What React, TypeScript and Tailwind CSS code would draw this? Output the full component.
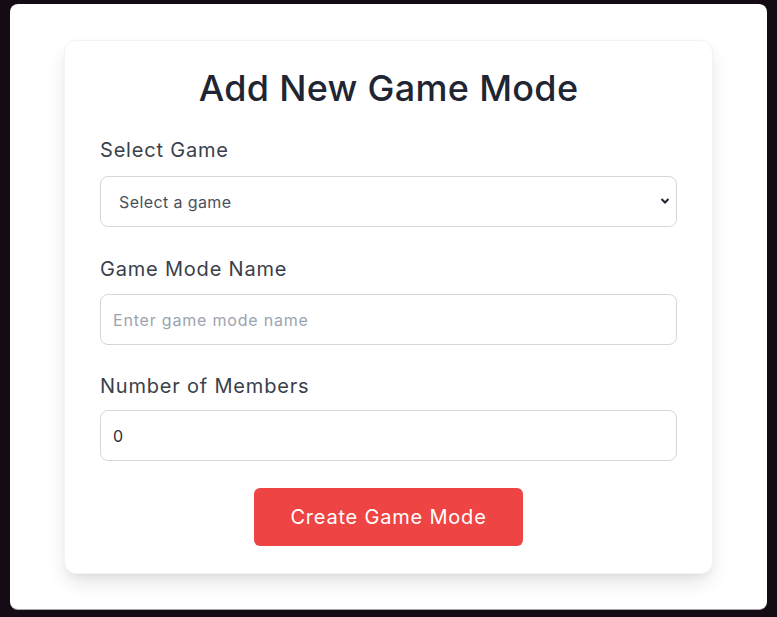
import React from "react";

export default function App() {
  return (
    <div className="w-[777px] h-[617px] bg-[#140b14] pt-[4px] px-[10px] pb-[7px]" style={{ fontFamily: "Inter, 'Noto Sans', sans-serif" }}>
      <div className="h-full bg-white rounded-[8px] border-b border-[#a8a4a8] pt-[36px] px-[54px]">
        <div className="bg-white rounded-[12px] shadow-[0_10px_20px_-3px_rgba(0,0,0,0.12),0_4px_8px_-4px_rgba(0,0,0,0.08)] border border-[#f3f3f3] px-[35px] pt-[27px] pb-[27px]">
          <h1 className="text-center text-[36px] leading-[40px] tracking-[0.3px] font-medium text-[#1f2533]">Add New Game Mode</h1>
          <div className="mt-[28px]">
            <label className="block text-[20px] leading-[28px] tracking-[0.8px] text-[#3a3f4b]">Select Game</label>
            <div className="relative mt-[12px]">
              <select className="appearance-none w-full h-[51px] rounded-[8px] border border-[#d4d6dc] bg-white pl-[18px] pr-10 text-[16px] tracking-[0.4px] text-[#4b5060] outline-none">
                <option>Select a game</option>
              </select>
              <svg className="absolute right-[7px] top-[20px] pointer-events-none" width="10" height="10" viewBox="0 0 10 10">
                <path d="M1.5 3 L5 6.5 L8.5 3" stroke="#1f2533" strokeWidth="2" fill="none" />
              </svg>
            </div>
          </div>
          <div className="mt-[28px]">
            <label className="block text-[20px] leading-[28px] tracking-[0.8px] text-[#3a3f4b]">Game Mode Name</label>
            <input
              className="mt-[11px] block w-full h-[51px] rounded-[8px] border border-[#d4d6dc] bg-white px-[12px] text-[16px] tracking-[0.8px] text-[#4b5060] placeholder:text-[#9ca3af] outline-none"
              placeholder="Enter game mode name"
            />
          </div>
          <div className="mt-[27px]">
            <label className="block text-[20px] leading-[28px] tracking-[0.8px] text-[#3a3f4b]">Number of Members</label>
            <input
              className="mt-[10px] block w-full h-[51px] rounded-[8px] border border-[#d4d6dc] bg-white px-[12px] text-[16px] text-[#2b2f3a] outline-none"
              defaultValue="0"
            />
          </div>
          <div className="mt-[27px] flex justify-center">
            <button className="w-[269px] h-[58px] rounded-[6px] bg-[#ef4444] text-white text-[20px] tracking-[0.8px]">Create Game Mode</button>
          </div>
        </div>
      </div>
    </div>
  );
}
